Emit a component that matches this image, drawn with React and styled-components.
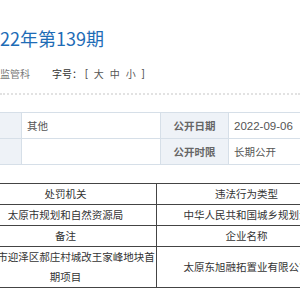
import React from 'react'
import styled, { createGlobalStyle } from "styled-components";

const GlobalSt = createGlobalStyle`
  html, body {
    margin: 0;
    padding: 0;
    background: #fff;
  }
  body {
    font-family: "Liberation Sans", "Noto Sans CJK SC", sans-serif;
    color: #333;
  }
  td {
    box-sizing: border-box;
  }
`

const PageSt = styled.div`
  width: 300px;
  height: 300px;
  overflow: hidden;
`

const TitleSt = styled.h1`
  margin: 0;
  padding-top: 23px;
  height: 30px;
  line-height: 30px;
  font-size: 18px;
  font-weight: 400;
  color: #1e6cb6;
  font-family: "Noto Sans CJK SC", sans-serif;
  white-space: nowrap;
`

const MetaBarSt = styled.div`
  display: flex;
  align-items: center;
  height: 40px;
  font-size: 10px;
  border-bottom: 2px dotted #e2e2e2;
  white-space: nowrap;
`

const MetaItemSt = styled.span`
  color: #777;
  margin-right: 22px;
`

const FontSizeSt = styled.span`
  color: #333;
`

const SizeBtnSt = styled.span`
  color: #555;
  margin: 0 3px;
`

const InfoTableSt = styled.table`
  border-collapse: collapse;
  margin: 17px 0 0 -49px;
  width: 427px;
  min-width: 427px;
  font-size: 10.5px;
  table-layout: fixed;
`

const InfoLabelSt = styled.td`
  width: ${p => p.$w}px;
  height: 26px;
  padding: 0;
  background: #eef2f7;
  border: 1px solid #d6dfe8;
  text-align: center;
  font-weight: 700;
  color: #666;
  font-size: 10.5px;
  font-family: "Noto Sans CJK SC", sans-serif;
`

const InfoValueSt = styled.td`
  width: ${p => p.$w}px;
  height: 26px;
  padding: 0 5px;
  border: 1px solid #d6dfe8;
  color: #555;
  white-space: nowrap;
`

const DateSt = styled.span`
  font-size: 11.5px;
`

const PenaltyTableSt = styled.table`
  border-collapse: collapse;
  margin: 18px 0 0 -26px;
  width: 362px;
  min-width: 362px;
  font-size: 10.5px;
  table-layout: fixed;
`

const CellSt = styled.td`
  width: ${p => p.$w || 181}px;
  padding: 0 1px;
  line-height: 20px;
  border: 1px solid #444;
  text-align: center;
  color: #333;
  font-family: "Noto Sans CJK SC", sans-serif;
  white-space: ${p => (p.$wrap ? "normal" : "nowrap")};
  overflow: hidden;
`

export default function App() {
  return (
    <PageSt>
      <GlobalSt />
      <TitleSt>22年第139期</TitleSt>

      <MetaBarSt>
        <MetaItemSt>监管科</MetaItemSt>
        <FontSizeSt>字号：</FontSizeSt>
        <SizeBtnSt>[</SizeBtnSt>
        <SizeBtnSt>大</SizeBtnSt>
        <SizeBtnSt>中</SizeBtnSt>
        <SizeBtnSt>小</SizeBtnSt>
        <SizeBtnSt>]</SizeBtnSt>
      </MetaBarSt>

      <InfoTableSt>
        <tbody>
          <tr>
            <InfoLabelSt $w={70}></InfoLabelSt>
            <InfoValueSt $w={139}>其他</InfoValueSt>
            <InfoLabelSt $w={68}>公开日期</InfoLabelSt>
            <InfoValueSt $w={150}><DateSt>2022-09-06</DateSt></InfoValueSt>
          </tr>
          <tr>
            <InfoLabelSt $w={70}></InfoLabelSt>
            <InfoValueSt $w={139}></InfoValueSt>
            <InfoLabelSt $w={68}>公开时限</InfoLabelSt>
            <InfoValueSt $w={150}>长期公开</InfoValueSt>
          </tr>
        </tbody>
      </InfoTableSt>

      <PenaltyTableSt>
        <tbody>
          <tr>
            <CellSt $w={182}>处罚机关</CellSt>
            <CellSt $w={180}>违法行为类型</CellSt>
          </tr>
          <tr>
            <CellSt $w={182}>太原市规划和自然资源局</CellSt>
            <CellSt $w={180}>中华人民共和国城乡规划法</CellSt>
          </tr>
          <tr>
            <CellSt $w={182}>备注</CellSt>
            <CellSt $w={180}>企业名称</CellSt>
          </tr>
          <tr>
            <CellSt $w={182} $wrap>太原市迎泽区郝庄村城改王家峰地块首期项目</CellSt>
            <CellSt $w={180}>太原东旭融拓置业有限公司</CellSt>
          </tr>
        </tbody>
      </PenaltyTableSt>
    </PageSt>
  );
};
